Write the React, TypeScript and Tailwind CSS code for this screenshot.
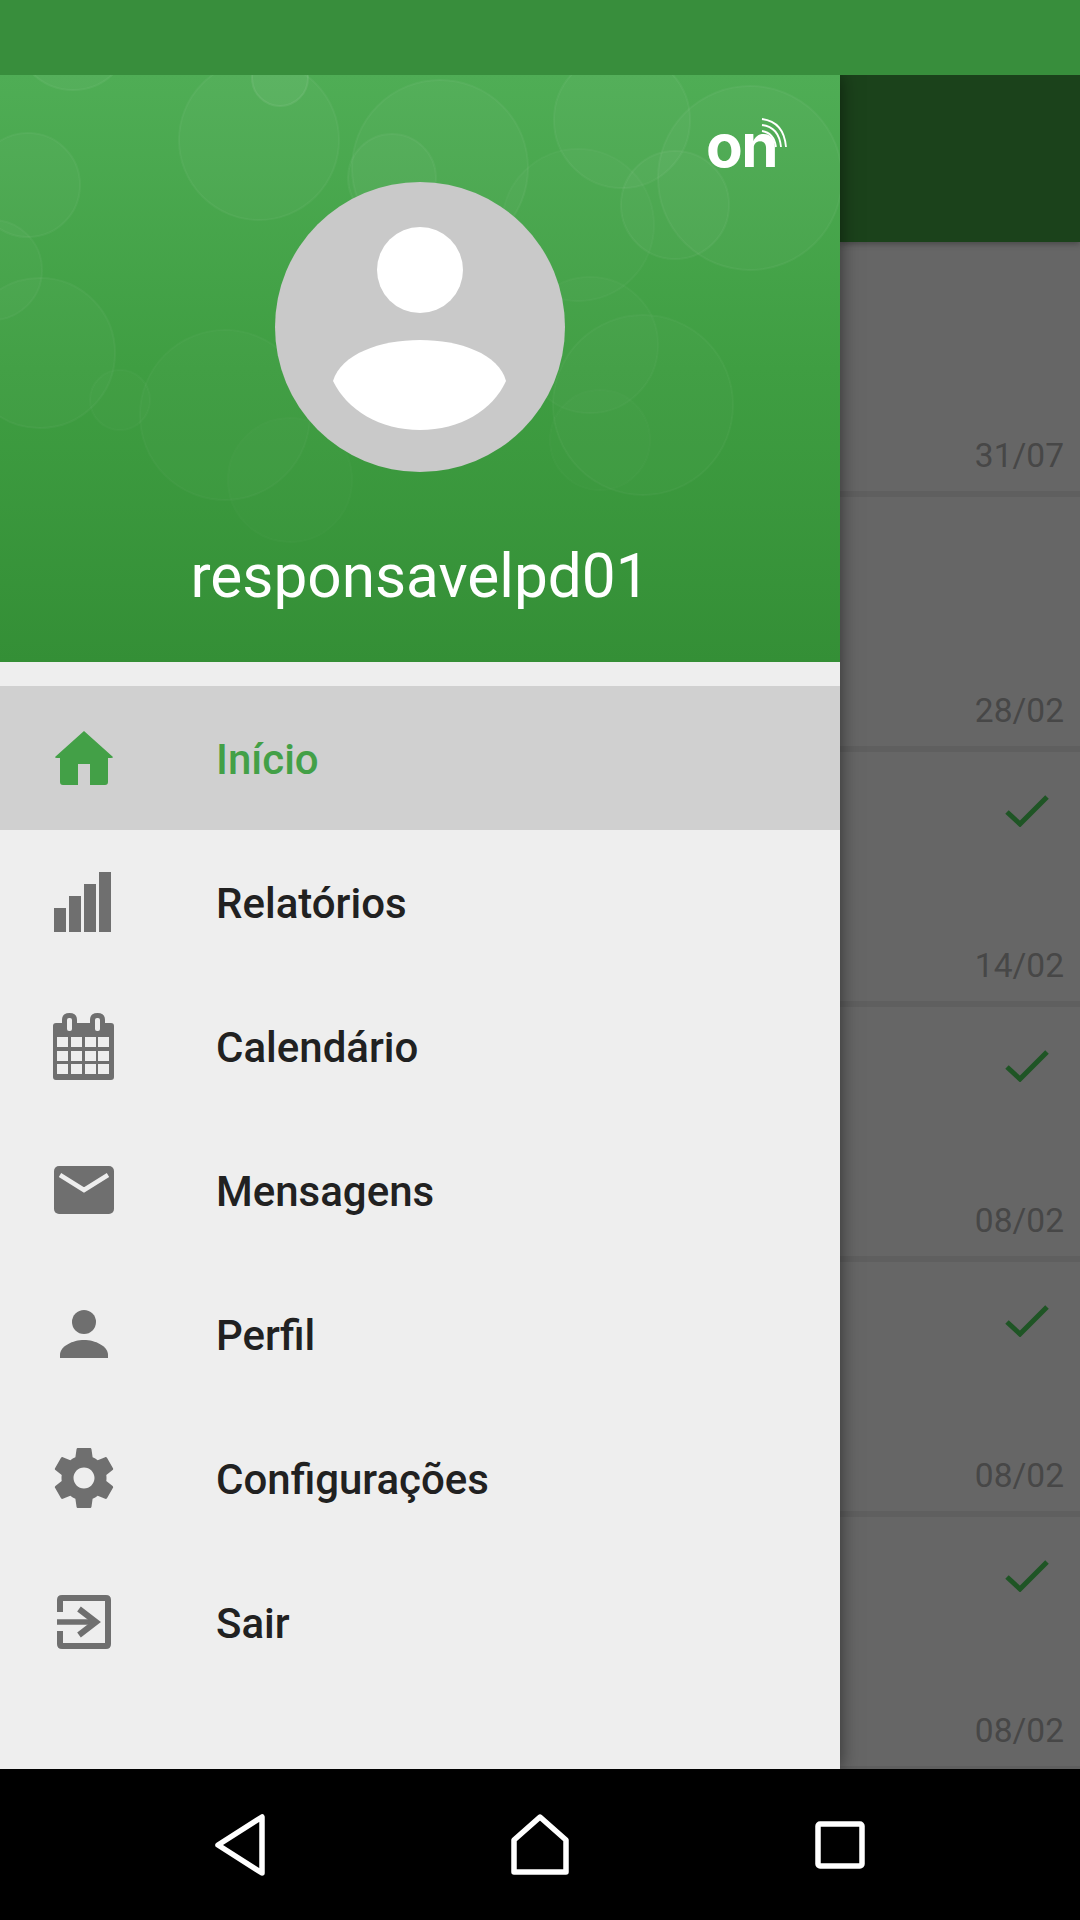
const bubbles = [
  [73, 32, 58, 0.035],
  [259, 140, 80, 0.03],
  [280, 78, 28, 0.05],
  [440, 168, 88, 0.03],
  [392, 178, 44, 0.03],
  [622, 120, 68, 0.03],
  [750, 178, 92, 0.03],
  [675, 205, 54, 0.03],
  [578, 225, 76, 0.02],
  [28, 185, 52, 0.03],
  [-8, 270, 50, 0.025],
  [40, 353, 75, 0.025],
  [225, 415, 85, 0.018],
  [290, 480, 62, 0.012],
  [643, 405, 90, 0.02],
  [590, 345, 68, 0.018],
  [600, 440, 50, 0.012],
  [120, 400, 30, 0.015],
];

function HomeIcon() {
  return (
    <svg viewBox="0 0 72 72" className="w-[72px] h-[72px] text-[#43a047]">
      <path
        d="M36 9 L65 35 Q65 36 63 36 H60 V60 Q60 63 57 63 H42 V42 H30 V63 H15 Q12 63 12 60 V36 H9 Q7 36 7 35 Z"
        fill="currentColor"
      />
    </svg>
  );
}

function BarsIcon() {
  return (
    <svg viewBox="0 0 72 72" className="w-[72px] h-[72px] text-[#6f6f6f]">
      <rect x="6" y="42" width="12" height="24" fill="currentColor" />
      <rect x="21" y="30" width="12" height="36" fill="currentColor" />
      <rect x="36" y="18" width="12" height="48" fill="currentColor" />
      <rect x="51" y="6" width="12" height="60" fill="currentColor" />
    </svg>
  );
}

function CalendarIcon() {
  const cols = [9, 23, 37, 50];
  const rows = [27, 41, 54];
  return (
    <svg viewBox="0 0 72 72" className="w-[72px] h-[72px] text-[#6f6f6f]">
      <path
        d="M8 13 H14 V10 Q14 3 21.5 3 Q29 3 29 10 V13 H42 V10 Q42 3 49.5 3 Q57 3 57 10 V13 H63 Q66 13 66 16 V67 Q66 70 63 70 H8 Q5 70 5 67 V16 Q5 13 8 13 Z"
        fill="currentColor"
      />
      <rect x="19" y="8" width="5" height="13" rx="2" fill="#eeeeee" />
      <rect x="47" y="8" width="5" height="13" rx="2" fill="#eeeeee" />
      {rows.map((y) =>
        cols.map((x) => (
          <rect key={`${x}-${y}`} x={x} y={y} width="11" height="10" fill="#eeeeee" />
        ))
      )}
    </svg>
  );
}

function MailIcon() {
  return (
    <svg viewBox="0 0 72 72" className="w-[72px] h-[72px] text-[#6f6f6f]">
      <rect x="6" y="12" width="60" height="48" rx="5" fill="currentColor" />
      <path d="M12 21 L36 36 L60 21" fill="none" stroke="#eeeeee" strokeWidth="4.5" />
    </svg>
  );
}

function PersonIcon() {
  return (
    <svg viewBox="0 0 72 72" className="w-[72px] h-[72px] text-[#6f6f6f]">
      <circle cx="36" cy="24" r="12" fill="currentColor" />
      <path d="M12 60 V57 C12 48 25 42 36 42 C47 42 60 48 60 57 V60 Z" fill="currentColor" />
    </svg>
  );
}

function GearIcon() {
  return (
    <svg viewBox="0 0 24 24" className="w-[72px] h-[72px] text-[#6f6f6f]">
      <path
        fill="currentColor"
        d="M19.43 12.98c.04-.32.07-.64.07-.98s-.03-.66-.07-.98l2.11-1.65c.19-.15.24-.42.12-.64l-2-3.46c-.12-.22-.39-.3-.61-.22l-2.49 1c-.52-.4-1.08-.73-1.69-.98l-.38-2.65C14.46 2.18 14.25 2 14 2h-4c-.25 0-.46.18-.49.42l-.38 2.65c-.61.25-1.17.59-1.69.98l-2.49-1c-.23-.09-.49 0-.61.22l-2 3.46c-.13.22-.07.49.12.64l2.11 1.65c-.04.32-.07.65-.07.98s.03.66.07.98l-2.11 1.65c-.19.15-.24.42-.12.64l2 3.46c.12.22.39.3.61.22l2.49-1c.52.4 1.08.73 1.69.98l.38 2.65c.03.24.24.42.49.42h4c.25 0 .46-.18.49-.42l.38-2.65c.61-.25 1.17-.59 1.69-.98l2.49 1c.23.09.49 0 .61-.22l2-3.46c.12-.22.07-.49-.12-.64l-2.11-1.65zM12 15.5c-1.93 0-3.5-1.57-3.5-3.5s1.57-3.5 3.5-3.5 3.5 1.57 3.5 3.5-1.57 3.5-3.5 3.5z"
      />
    </svg>
  );
}

function ExitIcon() {
  return (
    <svg viewBox="0 0 72 72" className="w-[72px] h-[72px] text-[#6f6f6f]">
      <path
        d="M12 26 V14 Q12 12 14 12 H58 Q60 12 60 14 V58 Q60 60 58 60 H14 Q12 60 12 58 V45"
        fill="none"
        stroke="currentColor"
        strokeWidth="6"
      />
      <path d="M9 36 H48" stroke="currentColor" strokeWidth="5.5" fill="none" />
      <path d="M31 23 L48 36 L31 49" stroke="currentColor" strokeWidth="6" fill="none" />
    </svg>
  );
}

const menu = [
  { label: "Início", icon: <HomeIcon />, active: true },
  { label: "Relatórios", icon: <BarsIcon /> },
  { label: "Calendário", icon: <CalendarIcon /> },
  { label: "Mensagens", icon: <MailIcon /> },
  { label: "Perfil", icon: <PersonIcon /> },
  { label: "Configurações", icon: <GearIcon /> },
  { label: "Sair", icon: <ExitIcon /> },
];

const items = [
  { date: "31/07" },
  { date: "28/02" },
  { date: "14/02", check: true },
  { date: "08/02", check: true },
  { date: "08/02", check: true },
  { date: "08/02", check: true },
];

function Row({ date, check }: { date: string; check?: boolean }) {
  return (
    <div className="border-b-[6px] border-[#5f5f5f] shrink-0">
      <div className="h-[249px] flex flex-col justify-between items-end pr-[16px] pb-[15px] pt-[43px]">
        <div className="h-[34px] pr-[15px]">
          {check && (
            <svg viewBox="0 0 44 32" className="w-[44px] h-[32px]">
              <path d="M2 17 L15 29 L42 2" fill="none" stroke="#1f5525" strokeWidth="5" />
            </svg>
          )}
        </div>
        <span className="text-[33.5px] leading-[40px] text-[#474747]">{date}</span>
      </div>
    </div>
  );
}

export default function App() {
  return (
    <div className="w-[1080px] h-[1920px] flex flex-col overflow-hidden bg-black font-[Roboto,sans-serif]">
      <div className="h-[75px] shrink-0 bg-[#388e3c]" />

      <div className="flex-1 flex overflow-hidden min-h-0">
        <aside className="w-[840px] shrink-0 flex flex-col bg-[#eeeeee] relative z-10 shadow-[0_0_18px_rgba(0,0,0,0.55)]">
          <header className="h-[587px] shrink-0 relative overflow-hidden flex flex-col items-center pt-[107px] bg-gradient-to-b from-[#4fad55] via-[#3f9e42] via-50% to-[#348f36]">
            <svg
              className="absolute inset-0 w-full h-full"
              viewBox="0 75 840 587"
              aria-hidden="true"
            >
              {bubbles.map(([cx, cy, r, o], i) => (
                <circle
                  key={i}
                  cx={cx}
                  cy={cy}
                  r={r}
                  fill="#ffffff"
                  fillOpacity={o}
                  stroke="#ffffff"
                  strokeOpacity={o * 1.5}
                  strokeWidth="2"
                />
              ))}
            </svg>

            <div className="absolute left-[706px] top-[34px] w-[90px] h-[70px]">
              <span className="absolute left-0 bottom-[3px] text-[60px] leading-[62px] font-bold text-white font-[Inter,sans-serif] tracking-[-1.5px]">
                on
              </span>
              <svg viewBox="0 0 40 40" className="absolute left-[48px] top-[8px] w-[40px] h-[40px]">
                <path d="M8 14 Q20 16 22 30" fill="none" stroke="#fff" strokeWidth="1.8" />
                <path d="M8 8 Q25 10 27 30" fill="none" stroke="#fff" strokeWidth="1.8" />
                <path d="M8 2 Q30 5 32 30" fill="none" stroke="#fff" strokeWidth="1.8" />
              </svg>
            </div>

            <svg viewBox="0 0 290 290" className="relative w-[290px] h-[290px] shrink-0">
              <circle cx="145" cy="145" r="145" fill="#c9c9c9" />
              <circle cx="145" cy="88" r="43" fill="#ffffff" />
              <path
                d="M58 199 C66 172 105 158 145 158 C185 158 224 172 231 199 C218 228 185 248 145 248 C105 248 72 228 58 199 Z"
                fill="#ffffff"
              />
            </svg>
            <div className="relative mt-[70px] text-[60.3px] leading-[70px] text-white">responsavelpd01</div>
          </header>

          <nav className="pt-[24px]">
            {menu.map((m) => (
              <div
                key={m.label}
                className={`h-[144px] flex items-center ${m.active ? "bg-[#d0d0d0]" : ""}`}
              >
                <div className="ml-[48px] mr-[96px] w-[72px] h-[72px] shrink-0">{m.icon}</div>
                <span
                  className={`text-[42px] leading-[48px] pt-[4px] font-medium ${m.active ? "text-[#43a047]" : "text-[#212121]"}`}
                >
                  {m.label}
                </span>
              </div>
            ))}
          </nav>
        </aside>

        <div className="flex-1 flex flex-col bg-[#666666] min-w-0">
          <div className="h-[167px] shrink-0 bg-[#1b421b] shadow-[0_2px_6px_rgba(0,0,0,0.3)]" />
          {items.map((it, i) => (
            <Row key={i} date={it.date} check={it.check} />
          ))}
        </div>
      </div>

      <div className="h-[151px] shrink-0 bg-black flex items-center justify-center gap-[240px]">
        <svg viewBox="0 0 60 64" className="w-[60px] h-[64px]">
          <path d="M8 32 L52 4 V60 Z" fill="none" stroke="#fff" strokeWidth="5.5" strokeLinejoin="round" />
        </svg>
        <svg viewBox="0 0 60 64" className="w-[60px] h-[64px]">
          <path d="M4 59 V27 L30 4 L56 27 V59 Z" fill="none" stroke="#fff" strokeWidth="5.5" strokeLinejoin="round" />
        </svg>
        <svg viewBox="0 0 60 64" className="w-[60px] h-[64px]">
          <rect x="8" y="11" width="44" height="42" rx="2" fill="none" stroke="#fff" strokeWidth="5.5" />
        </svg>
      </div>
    </div>
  );
}
